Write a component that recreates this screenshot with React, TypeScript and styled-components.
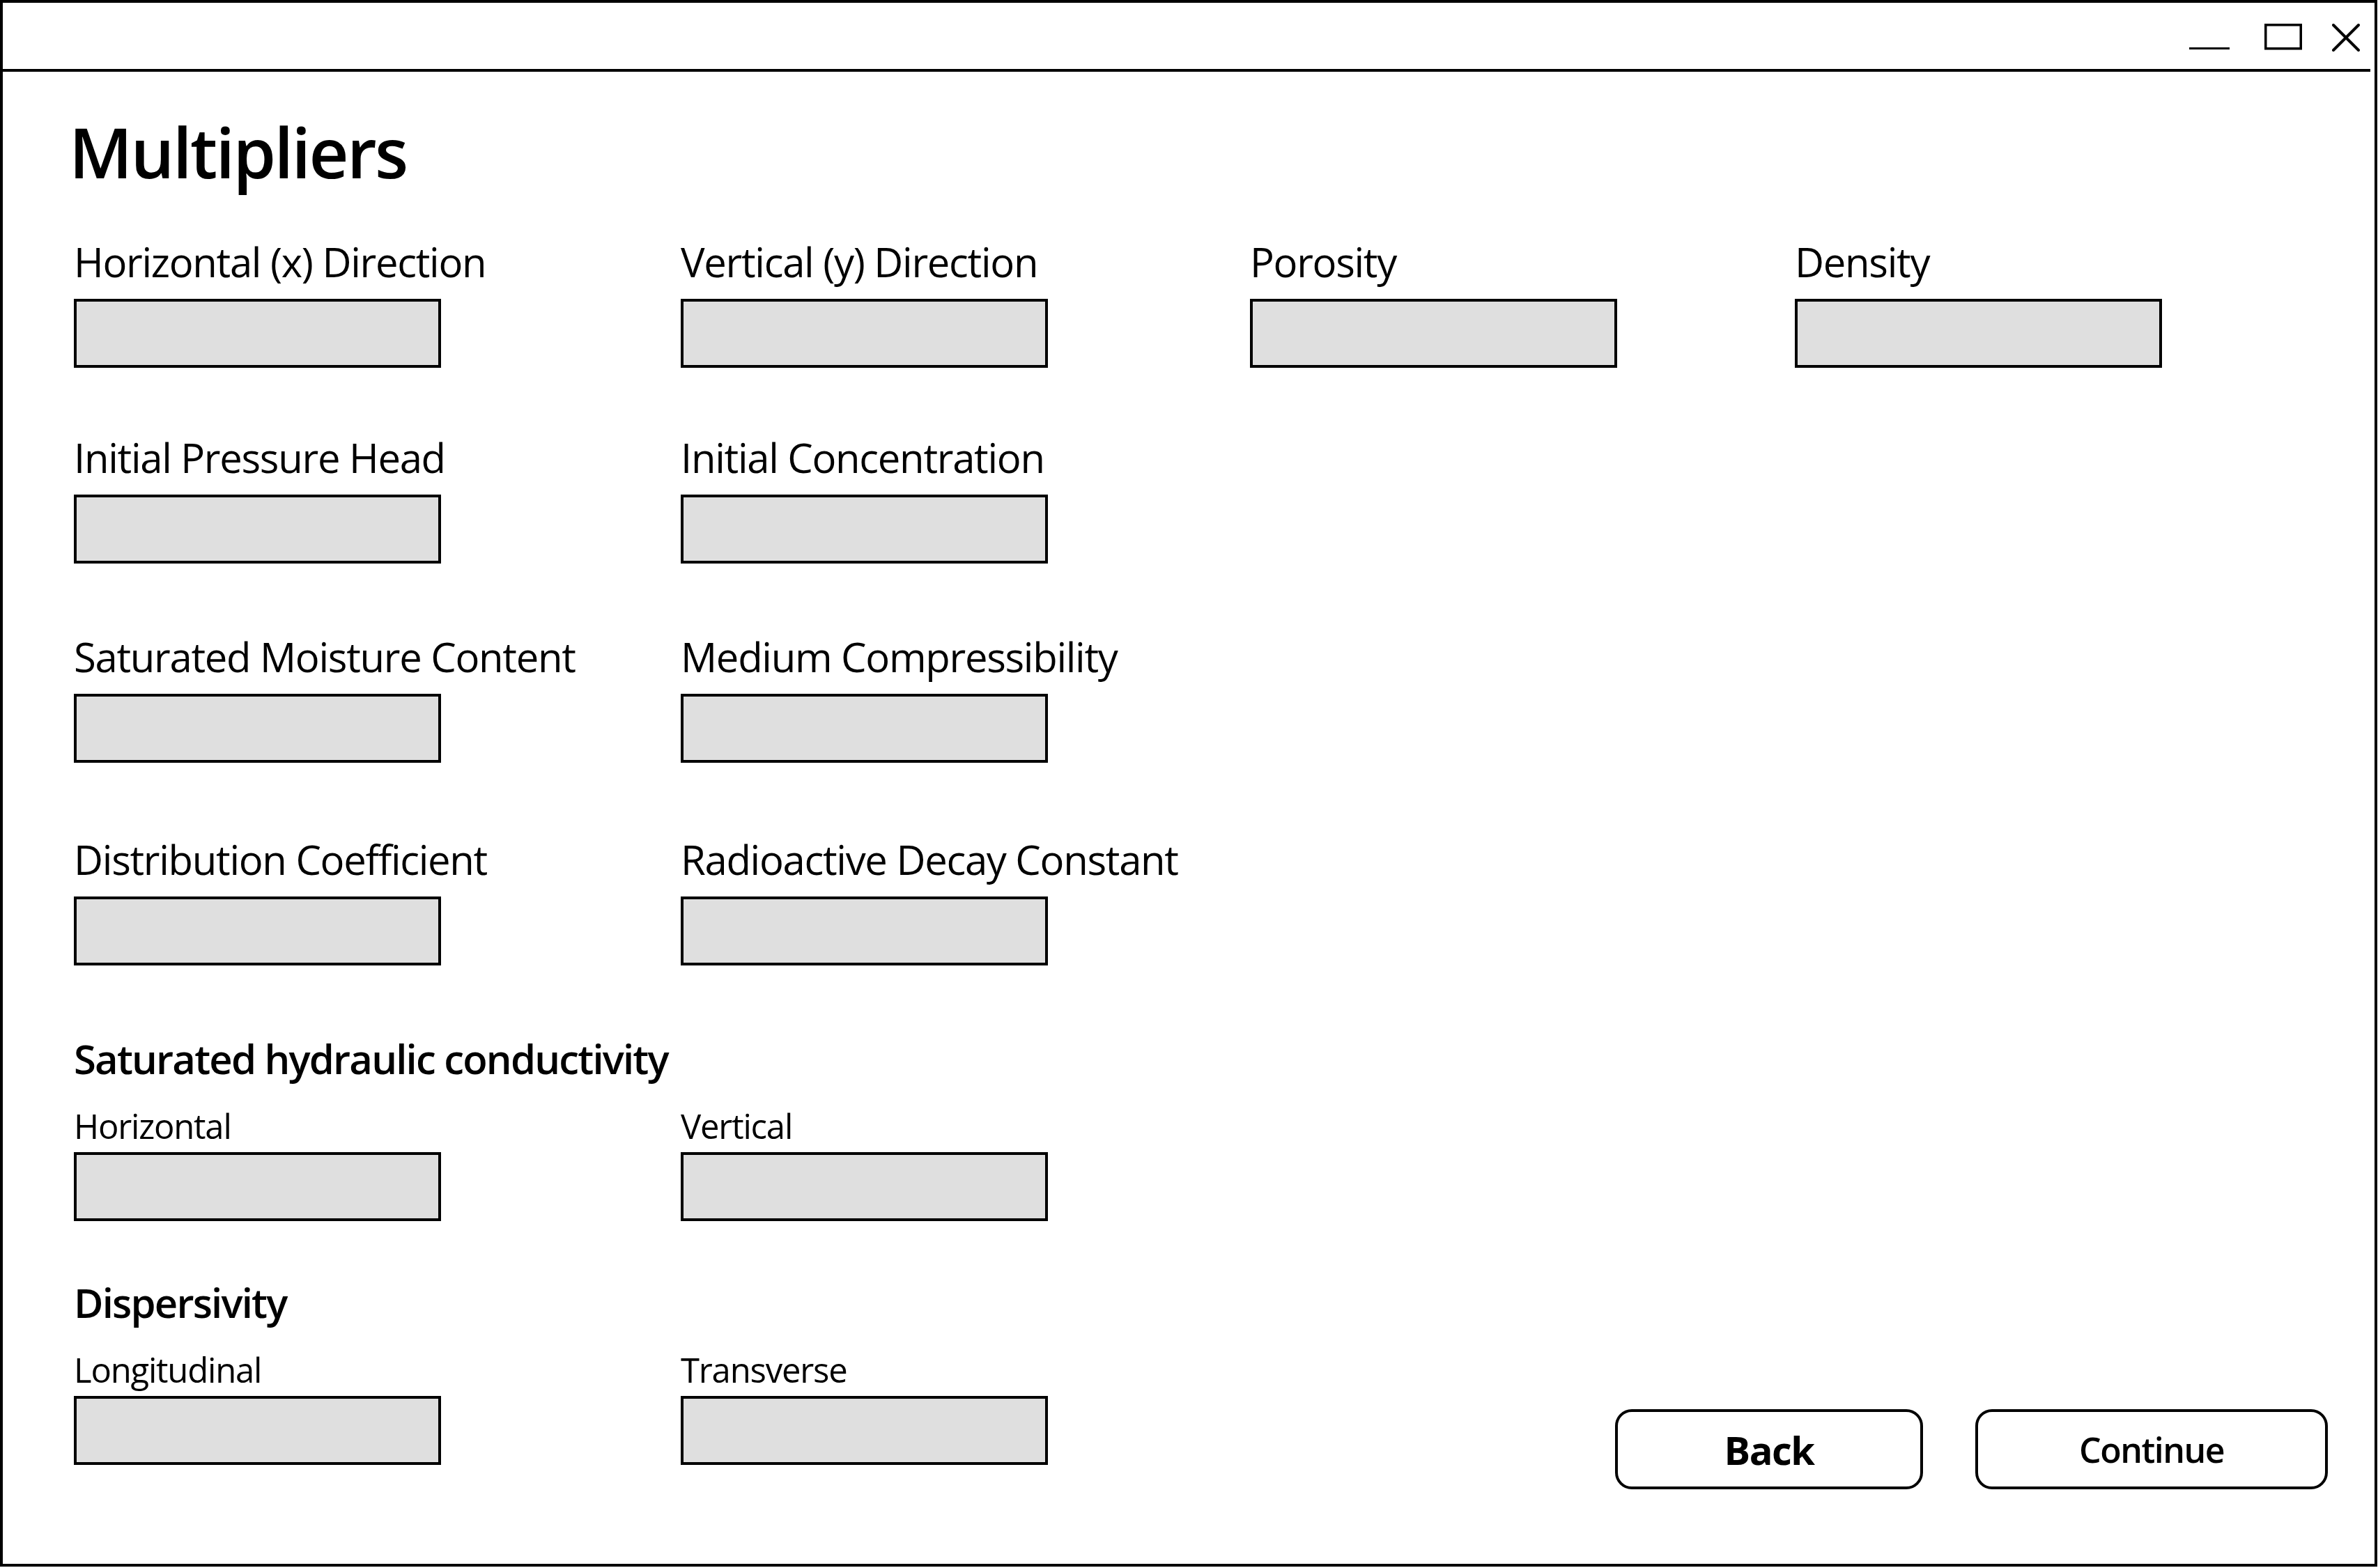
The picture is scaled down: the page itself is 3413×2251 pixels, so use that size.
import React from "react";
import styled, { createGlobalStyle } from "styled-components";

const GlobalStyle = createGlobalStyle`
  html, body { margin: 0; padding: 0; background: #ffffff; }
  body { font-family: "Open Sans", "Noto Sans", sans-serif; color: #000; }
  *, *::before, *::after { box-sizing: border-box; }
`;

const Window = styled.div`
  width: 3412px;
  height: 2249px;
  border: 4px solid #000;
  background: #fff;
  display: flex;
  flex-direction: column;
`;

const TitleBar = styled.header`
  height: 99px;
  margin-right: 6px;
  border-bottom: 4px solid #000;
  display: flex;
  justify-content: flex-end;
  align-items: flex-start;
  gap: 43px;
  padding: 30px 15px 0 0;
`;

const ControlIcon = styled.svg`
  display: block;
  flex: none;
`;

const Body = styled.main`
  flex: 1;
  display: flex;
  flex-direction: column;
  padding: 0 67px 0 102px;
`;

const Title = styled.h1`
  margin: 65px 0 0 -7px;
  font-size: 99px;
  line-height: 100px;
  font-weight: 600;
  letter-spacing: -2.6px;
`;

const FieldRow = styled.div<{ $top: number }>`
  margin-top: ${(p) => p.$top}px;
  display: grid;
  grid-template-columns: 871px 817px 782px 1fr;
`;

const Field = styled.div`
  display: flex;
  flex-direction: column;
  align-items: flex-start;
`;

const Label = styled.label<{ $small?: boolean }>`
  font-size: ${(p) => (p.$small ? 49 : 58)}px;
  line-height: ${(p) => (p.$small ? 49 : 58)}px;
  letter-spacing: ${(p) => (p.$small ? -1.2 : -1.3)}px;
  white-space: nowrap;
`;

const Box = styled.input<{ $gap: number }>`
  display: block;
  margin: ${(p) => p.$gap}px 0 0 0;
  width: 527px;
  height: 99px;
  padding: 0;
  border: 4px solid #000;
  border-radius: 0;
  background: #dfdfdf;
  font: inherit;
  outline: none;
`;

const Section = styled.section<{ $top: number; $bottom?: number }>`
  margin-top: ${(p) => p.$top}px;
  padding-bottom: ${(p) => p.$bottom ?? 0}px;
  display: flex;
  flex-direction: column;
`;

const SectionHeading = styled.h2`
  margin: 0;
  font-size: 58px;
  line-height: 58px;
  font-weight: 600;
  letter-spacing: -1.8px;
  white-space: nowrap;
`;

const SubRow = styled.div`
  margin-top: 43px;
  display: grid;
  grid-template-columns: 871px 527px;
`;

const BottomRow = styled.div<{ $top: number }>`
  margin-top: ${(p) => p.$top}px;
  display: flex;
  justify-content: space-between;
  align-items: flex-end;
`;

const Actions = styled.div`
  display: flex;
  gap: 75px;
`;

const Button = styled.button<{ $width: number; $size: number; $weight: number }>`
  width: ${(p) => p.$width}px;
  height: 115px;
  border: 4px solid #000;
  border-radius: 24px;
  background: #fff;
  color: #000;
  font-family: "Open Sans", "Noto Sans", sans-serif;
  font-size: ${(p) => p.$size}px;
  font-weight: ${(p) => p.$weight};
  letter-spacing: -1.5px;
  line-height: 1;
  padding: 0;
  display: flex;
  align-items: center;
  justify-content: center;
`;

type FieldDef = { label: string };

const rows: { top: number; fields: FieldDef[] }[] = [
  {
    top: 79,
    fields: [
      { label: "Horizontal (x) Direction" },
      { label: "Vertical (y) Direction" },
      { label: "Porosity" },
      { label: "Density" },
    ],
  },
  { top: 100, fields: [{ label: "Initial Pressure Head" }, { label: "Initial Concentration" }] },
  { top: 105, fields: [{ label: "Saturated Moisture Content" }, { label: "Medium Compressibility" }] },
  { top: 110, fields: [{ label: "Distribution Coefficient" }, { label: "Radioactive Decay Constant" }] },
];

function SubFields({ labels }: { labels: string[] }) {
  return (
    <SubRow>
      {labels.map((l) => (
        <Field key={l}>
          <Label $small>{l}</Label>
          <Box $gap={13} readOnly aria-label={l} />
        </Field>
      ))}
    </SubRow>
  );
}

export default function App() {
  return (
    <>
      <GlobalStyle />
      <Window>
        <TitleBar>
          <ControlIcon width="65" height="40" viewBox="0 0 65 40">
            <line x1="0" y1="35.5" x2="58" y2="35.5" stroke="#000" strokeWidth="3" />
          </ControlIcon>
          <ControlIcon width="54" height="40" viewBox="0 0 54 40">
            <rect x="1.75" y="1.75" width="50.5" height="34" fill="none" stroke="#000" strokeWidth="3.5" />
          </ControlIcon>
          <ControlIcon width="40" height="40" viewBox="0 0 40 40">
            <path d="M2 2 L38 38 M38 2 L2 38" stroke="#000" strokeWidth="4" strokeLinecap="round" />
          </ControlIcon>
        </TitleBar>
        <Body>
          <Title>Multipliers</Title>
          {rows.map((row, i) => (
            <FieldRow key={i} $top={row.top}>
              {row.fields.map((f) => (
                <Field key={f.label}>
                  <Label>{f.label}</Label>
                  <Box $gap={24} readOnly aria-label={f.label} />
                </Field>
              ))}
            </FieldRow>
          ))}
          <Section $top={105}>
            <SectionHeading>Saturated hydraulic conductivity</SectionHeading>
            <SubFields labels={["Horizontal", "Vertical"]} />
          </Section>
          <BottomRow $top={88}>
            <Section $top={0} $bottom={35}>
              <SectionHeading>Dispersivity</SectionHeading>
              <SubFields labels={["Longitudinal", "Transverse"]} />
            </Section>
            <Actions>
              <Button $width={442} $size={56} $weight={700}>Back</Button>
              <Button $width={506} $size={50} $weight={600}>Continue</Button>
            </Actions>
          </BottomRow>
        </Body>
      </Window>
    </>
  );
}
